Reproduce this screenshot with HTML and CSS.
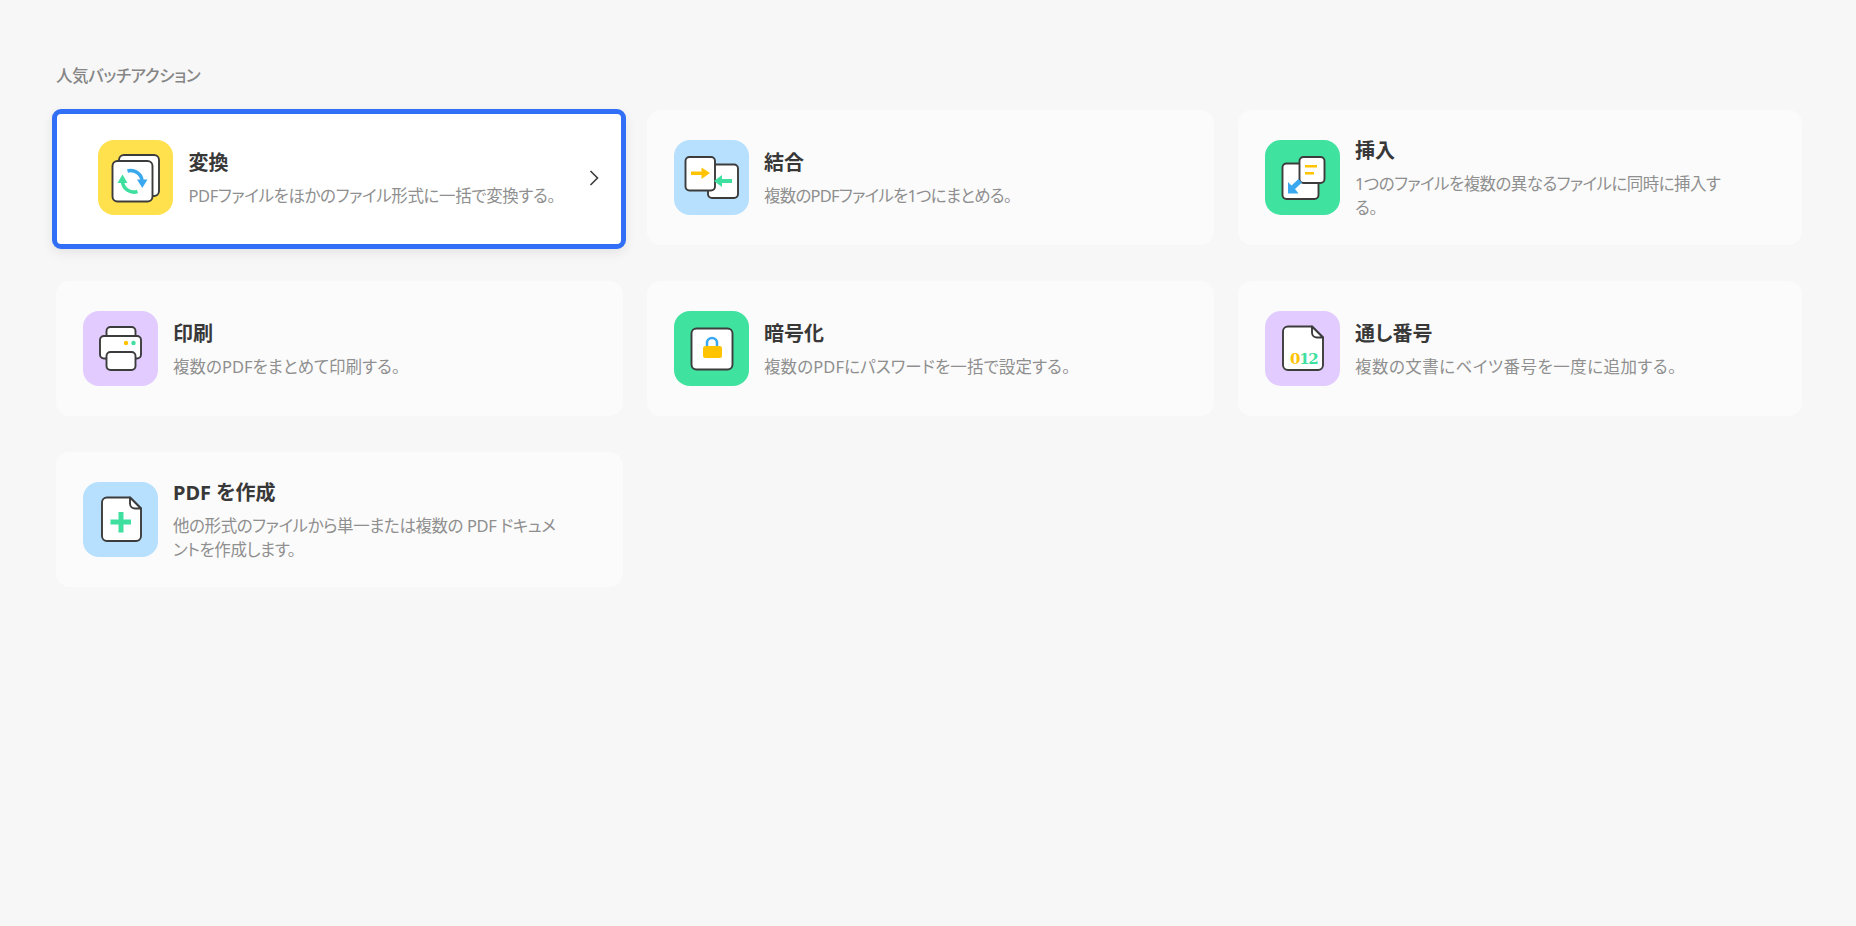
FILE: index.html
```html
<!DOCTYPE html>
<html lang="ja">
<head>
<meta charset="utf-8">
<title>人気バッチアクション</title>
<link rel="stylesheet" href="styles.css">
</head>
<body>
<main class="page-wrap">
  <h2 class="heading">人気バッチアクション</h2>
  <div class="grid">
    <a class="card active">
      <span class="icon yellow">
        <svg viewBox="0 0 75 75">
          <rect class="sheet" x="21" y="15" width="40" height="41" rx="5"/>
          <rect class="sheet" x="14.500" y="21" width="40" height="40.500" rx="5"/>
          <path class="arc blue-s" d="M29.500 31a11.500 11.500 0 0 1 14.500 9"/>
          <path class="fill-blue" d="M39 39.500h10.500l-5.200 8.500z"/>
          <path class="arc green-s" d="M39.500 51.500a11.500 11.500 0 0 1-15-9.500"/>
          <path class="fill-green" d="M19.500 43h10l-5-8.500z"/>
        </svg>
      </span>
      <span class="text">
        <span class="title">変換</span>
        <span class="desc tight-b">PDFファイルをほかのファイル形式に一括で変換する。</span>
      </span>
      <svg class="chevron" viewBox="0 0 12 18"><path d="M2.500 2l7 7-7 7"/></svg>
    </a>
    <a class="card">
      <span class="icon blue">
        <svg viewBox="0 0 75 75">
          <rect class="sheet" x="34" y="24.500" width="30" height="33.500" rx="4"/>
          <rect class="sheet" x="11.500" y="17" width="29.500" height="33.500" rx="4"/>
          <path class="fill-yellow" d="M17 31.500h10.500v-4l8.500 5.500-8.500 6v-4H17z"/>
          <path class="fill-green" d="M58 39h-10v-4l-8 6 8 6v-4h10z"/>
        </svg>
      </span>
      <span class="text">
        <span class="title">結合</span>
        <span class="desc tight-d">複数のPDFファイルを1つにまとめる。</span>
      </span>
    </a>
    <a class="card">
      <span class="icon green">
        <svg viewBox="0 0 75 75">
          <rect class="sheet" x="17.500" y="23.500" width="36" height="35.500" rx="4"/>
          <rect class="sheet" x="34.500" y="17" width="25" height="26" rx="4"/>
          <rect class="fill-yellow" x="40" y="25" width="12" height="2.500"/>
          <rect class="fill-yellow" x="40" y="32" width="9" height="2.500"/>
          <path class="fill-blue" d="M23 42l3.500 3.500 7-6.500 3.500 3.500-7 6.500 3.500 4.500H23z"/>
        </svg>
      </span>
      <span class="text">
        <span class="title">挿入</span>
        <span class="desc tight-c">1つのファイルを複数の異なるファイルに同時に挿入する。</span>
      </span>
    </a>
    <a class="card">
      <span class="icon purple">
        <svg viewBox="0 0 75 75">
          <rect class="sheet" x="23.500" y="16" width="29" height="16" rx="4"/>
          <rect class="sheet" x="17" y="25" width="41" height="22.500" rx="4"/>
          <rect class="sheet" x="23.500" y="41" width="29" height="18" rx="4"/>
          <circle class="fill-yellow" cx="43" cy="32" r="2.200"/>
          <circle class="fill-green" cx="50.500" cy="32" r="2.200"/>
        </svg>
      </span>
      <span class="text">
        <span class="title">印刷</span>
        <span class="desc">複数のPDFをまとめて印刷する。</span>
      </span>
    </a>
    <a class="card">
      <span class="icon green">
        <svg viewBox="0 0 75 75">
          <rect class="sheet" x="17.500" y="17.500" width="41" height="41" rx="5"/>
          <path class="arc blue-s thin" d="M33 36v-4a5 5 0 0 1 10 0v4"/>
          <rect class="fill-yellow" x="29" y="35" width="19" height="12" rx="2.500"/>
        </svg>
      </span>
      <span class="text">
        <span class="title">暗号化</span>
        <span class="desc wide-a">複数のPDFにパスワードを一括で設定する。</span>
      </span>
    </a>
    <a class="card">
      <span class="icon purple">
        <svg viewBox="0 0 75 75">
          <path class="sheet" d="M23 15.500h24l11 11v27.500a5 5 0 0 1-5 5H23a5 5 0 0 1-5-5V20.500a5 5 0 0 1 5-5z"/>
          <path class="sheet" d="M47 15.500v6a5 5 0 0 0 5 5h6z"/>
          <text class="digits" x="25" y="53"><tspan class="digit-y">0</tspan><tspan class="digit-g">12</tspan></text>
        </svg>
      </span>
      <span class="text">
        <span class="title">通し番号</span>
        <span class="desc wide-b">複数の文書にベイツ番号を一度に追加する。</span>
      </span>
    </a>
    <a class="card">
      <span class="icon blue">
        <svg viewBox="0 0 75 75">
          <path class="sheet" d="M24 15.500h23l11 11v27.500a5 5 0 0 1-5 5H24a5 5 0 0 1-5-5V20.500a5 5 0 0 1 5-5z"/>
          <path class="sheet" d="M47 15.500v6a5 5 0 0 0 5 5h6z"/>
          <path class="fill-green" d="M35.500 30h5v7.500H48v5h-7.500v8h-5v-8h-8v-5h8z"/>
        </svg>
      </span>
      <span class="text">
        <span class="title">PDF を作成</span>
        <span class="desc tight-a">他の形式のファイルから単一または複数の PDF ドキュメントを作成します。</span>
      </span>
    </a>
  </div>
</main>
</body>
</html>
```
FILE: styles.css
```css
* { box-sizing: border-box; }
html, body { height: 100%; }
body {
  margin: 0;
  background: #f7f7f7;
  font-family: "Noto Sans", "Noto Sans CJK JP", sans-serif;
  font-feature-settings: "palt";
}
.page-wrap { padding: 64px 51px 0 56px; }
.heading {
  margin: 0 0 22px;
  font-size: 16.500px;
  letter-spacing: -.4px;
  line-height: 24px;
  font-weight: 500;
  color: #868686;
}
.grid {
  display: grid;
  grid-template-columns: 567px 567px 564px;
  grid-auto-rows: 135px;
  column-gap: 24px;
  row-gap: 36px;
}
.card {
  display: flex;
  align-items: center;
  gap: 15px;
  padding: 0 27px;
  background: #fbfbfb;
  border-radius: 14px;
}
.card.active {
  gap: 16px;
  margin: -1px -2.500px -4px -4.500px;
  padding: 0 21px 0 41px;
  background: #fff;
  border: 5.500px solid #316ff6;
  border-radius: 9px;
  box-shadow: 0 4px 12px rgba(0, 0, 0, .08);
}
.active .icon { margin-top: -3px; }
.active .text { margin-top: -3px; }
.icon {
  flex: none;
  width: 75px;
  height: 75px;
  border-radius: 16px;
}
.icon svg { display: block; width: 75px; height: 75px; }
.yellow { background: #ffe04d; }
.blue { background: #b6e0fd; }
.green { background: #40e2a0; }
.purple { background: #e2ccff; }
.text { display: block; width: 386px; }
.title {
  display: block;
  padding-top: 1px;
  font-size: 20px;
  line-height: 28px;
  font-weight: 700;
  color: #383838;
  margin-bottom: 7px;
}
.desc {
  display: block;
  font-size: 16.500px;
  line-height: 24px;
  color: #8f8f8f;
}
.tight-a { letter-spacing: -.42px; }
.tight-b { letter-spacing: -.38px; }
.tight-c { letter-spacing: -.57px; }
.tight-d { letter-spacing: -.77px; }
.wide-a { letter-spacing: .1px; }
.wide-b { letter-spacing: .47px; }
.chevron {
  flex: none;
  width: 12px;
  height: 18px;
  margin-left: auto;
  margin-top: -3px;
  fill: none;
  stroke: #3c3c3c;
  stroke-width: 1.600;
}
.sheet { fill: #fff; stroke: #3c3c3c; stroke-width: 1.900; stroke-linejoin: round; }
.arc { fill: none; stroke-width: 3.500; }
.arc.thin { stroke-width: 2.500; }
.blue-s { stroke: #3aa8ee; }
.green-s { stroke: #3fdf9f; }
.fill-blue { fill: #3aa8ee; }
.fill-green { fill: #3fdf9f; }
.fill-yellow { fill: #ffc300; }
.digits { font-family: "DejaVu Serif", serif; font-size: 15px; font-weight: 700; letter-spacing: -1.300px; }
.digit-y { fill: #ffc300; }
.digit-g { fill: #3fdf9f; }
```
